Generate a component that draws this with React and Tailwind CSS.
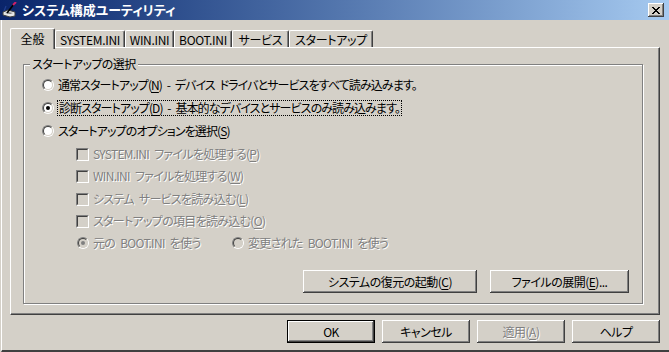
import React from "react";

const face = "bg-[#D4D0C8]";
const raised =
  "shadow-[inset_-1px_-1px_0_#404040,inset_1px_1px_0_#ffffff,inset_-2px_-2px_0_#808080,inset_2px_2px_0_#D4D0C8]";
const dim = "text-[#808080] [text-shadow:1px_1px_0_#ffffff]";

// mnemonic letter, underlined
const M = ({ children }) => <span className="underline underline-offset-2">{children}</span>;

const Radio = ({ checked, disabled }) => (
  <span className="flex w-[12px] h-[12px] shrink-0 rounded-full border border-t-[#808080] border-l-[#808080] border-r-white border-b-white">
    <span
      className={
        "flex items-center justify-center w-full h-full rounded-full border border-t-[#404040] border-l-[#404040] border-r-[#D4D0C8] border-b-[#D4D0C8] " +
        (disabled ? "bg-[#D4D0C8]" : "bg-white")
      }
    >
      {checked && (
        <span className={"w-[4px] h-[4px] rounded-full " + (disabled ? "bg-[#808080]" : "bg-black")} />
      )}
    </span>
  </span>
);

const Check = () => (
  <span className="flex w-[13px] h-[13px] shrink-0 border border-t-[#808080] border-l-[#808080] border-r-white border-b-white">
    <span className="w-full h-full bg-[#D4D0C8] border border-t-[#404040] border-l-[#404040] border-r-[#D4D0C8] border-b-[#D4D0C8]" />
  </span>
);

const Button = ({ className, children, isDefault, disabled }) => (
  <div
    className={
      "flex items-center justify-center h-[23px] tracking-[-0.5px] " +
      face +
      " " +
      (isDefault ? "border border-black " : "") +
      raised +
      " " +
      (disabled ? dim : "text-black") +
      " " +
      className
    }
  >
    <span className="leading-[16px]">{children}</span>
  </div>
);

const tabs = [
  { label: "SYSTEM.INI", w: "w-[70px]" },
  { label: "WIN.INI", w: "w-[49px]" },
  { label: "BOOT.INI", w: "w-[58px]" },
  { label: "サービス", w: "w-[57px]" },
  { label: "スタートアップ", w: "w-[84px]" },
];

const AppIcon = () => (
  <svg width="16" height="16" viewBox="0 0 16 16" className="shrink-0">
    <path d="M1 10 L6 8 L13 10 L13 14 L8 15 L1 13 Z" fill="#e8e8e8" stroke="#404040" strokeWidth="1" />
    <path d="M3 11 L6 10 L11 11 L8 12 Z" fill="#7a7a7a" />
    <path d="M5 11 L12 2" stroke="#000" strokeWidth="1.6" />
    <path d="M11 3 L14 0" stroke="#d0206a" strokeWidth="2" />
    <path d="M2 9 L4 4" stroke="#1f3f8f" strokeWidth="1.2" />
  </svg>
);

export default function App() {
  return (
    <div className="w-[669px] h-[352px] overflow-hidden bg-[#D4D0C8] flex flex-col font-['Noto_Sans_CJK_JP',sans-serif] [font-feature-settings:'palt'] text-[12px] text-black">
      {/* title bar */}
      <div className="h-[20px] shrink-0 flex items-center bg-linear-to-r from-[#0A246A] to-[#A6CAF0] pl-[2px] pr-[5px]">
        <AppIcon />
        <span className="ml-[4px] text-white font-bold text-[13px] leading-[16px]">
          システム構成ユーティリティ
        </span>
        <div className={"ml-auto flex items-center justify-center w-[16px] h-[14px] " + face + " " + raised}>
          <svg width="8" height="7" viewBox="0 0 8 7">
            <path d="M0 0h2v1h1v1h2v-1h1v-1h2v1h-1v1h-1v1h-1v1h1v1h1v1h1v1h-2v-1h-1v-1h-2v1h-1v1h-2v-1h1v-1h1v-1h1v-1h-1v-1h-1v-1h-1z" fill="#000" />
          </svg>
        </div>
      </div>

      {/* body */}
      <div className="flex-1 flex flex-col ml-[1px] border-l border-white pl-[8px] pr-[9px] border-b-2 border-b-[#404040]">
        {/* tabs */}
        <div className="mt-[8px] h-[19px] flex items-end">
          <div className={"relative z-10 w-[45px] h-[21px] -mb-[2px] " + face + " border-l border-t border-white rounded-tl-[2px] rounded-tr-[2px] border-r border-r-[#404040] shadow-[inset_-1px_0_0_#808080] flex items-start justify-center pt-[2px]"}>
            <span className="leading-[16px]">全般</span>
          </div>
          {tabs.map((t) => (
            <div
              key={t.label}
              className={
                t.w +
                " h-[17px] border-l border-t border-white rounded-tl-[2px] rounded-tr-[2px] border-r border-r-[#404040] shadow-[inset_-1px_0_0_#808080] flex items-start justify-center pt-[1px] tracking-[-0.3px]"
              }
            >
              <span className="leading-[15px]">{t.label}</span>
            </div>
          ))}
        </div>

        {/* tab panel */}
        <div className="h-[268px] border-l border-t border-white border-r border-b border-r-[#404040] border-b-[#404040] shadow-[inset_-1px_-1px_0_#808080] pl-[12px] pt-[16px]">
          {/* group box */}
          <div className="relative w-[620px] h-[240px] border border-[#808080] shadow-[1px_1px_0_#ffffff,inset_1px_1px_0_#ffffff] pt-[12px] pl-[18px] pr-[13px]">
            <span className={"absolute -top-[9px] left-[6px] px-[2px] leading-[16px] tracking-[-0.6px] " + face}>
              スタートアップの選択
            </span>

            <div className="flex flex-col tracking-[-0.9px] [word-spacing:3px]">
              <div className="h-[16px] flex items-center">
                <Radio />
                <span className="ml-[3px] leading-[16px] px-[1px]">
                  通常スタートアップ(<M>N</M>) - デバイス ドライバとサービスをすべて読み込みます。
                </span>
              </div>
              <div className="mt-[7px] h-[16px] flex items-center">
                <Radio checked />
                <span className="ml-[3px] leading-[14px] px-[1px] border border-dotted border-black">
                  診断スタートアップ(<M>D</M>) - 基本的なデバイスとサービスのみ読み込みます。
                </span>
              </div>
              <div className="mt-[7px] h-[16px] flex items-center">
                <Radio />
                <span className="ml-[3px] leading-[16px] px-[1px]">
                  スタートアップのオプションを選択(<M>S</M>)
                </span>
              </div>

              <div className="pl-[34px] flex flex-col tracking-[-0.7px]">
                <div className="mt-[7px] h-[16px] flex items-center">
                  <Check />
                  <span className={"ml-[4px] leading-[16px] " + dim}>
                    SYSTEM.INI ファイルを処理する(<M>P</M>)
                  </span>
                </div>
                <div className="mt-[6px] h-[16px] flex items-center">
                  <Check />
                  <span className={"ml-[4px] leading-[16px] " + dim}>
                    WIN.INI ファイルを処理する(<M>W</M>)
                  </span>
                </div>
                <div className="mt-[7px] h-[16px] flex items-center">
                  <Check />
                  <span className={"ml-[4px] leading-[16px] " + dim}>
                    システム サービスを読み込む(<M>L</M>)
                  </span>
                </div>
                <div className="mt-[6px] h-[16px] flex items-center">
                  <Check />
                  <span className={"ml-[4px] leading-[16px] " + dim}>
                    スタートアップの項目を読み込む(<M>O</M>)
                  </span>
                </div>
                <div className="mt-[6px] h-[16px] flex items-center">
                  <div className="w-[156px] flex items-center pl-[1px]">
                    <Radio checked disabled />
                    <span className={"ml-[4px] leading-[16px] " + dim}>元の BOOT.INI を使う</span>
                  </div>
                  <div className="flex items-center">
                    <Radio disabled />
                    <span className={"ml-[4px] leading-[16px] " + dim}>変更された BOOT.INI を使う</span>
                  </div>
                </div>
              </div>
            </div>

            <div className="mt-[19px] flex justify-end gap-[13px]">
              <Button className="w-[174px]">
                システムの復元の起動(<M>C</M>)
              </Button>
              <Button className="w-[139px]">
                ファイルの展開(<M>E</M>)...
              </Button>
            </div>
          </div>
        </div>

        {/* dialog buttons */}
        <div className="mt-[5px] flex justify-end gap-[7px]">
          <Button className="w-[88px]" isDefault>
            OK
          </Button>
          <Button className="w-[88px]">キャンセル</Button>
          <Button className="w-[88px]" disabled>
            適用(<M>A</M>)
          </Button>
          <Button className="w-[88px]">ヘルプ</Button>
        </div>
      </div>
    </div>
  );
}
